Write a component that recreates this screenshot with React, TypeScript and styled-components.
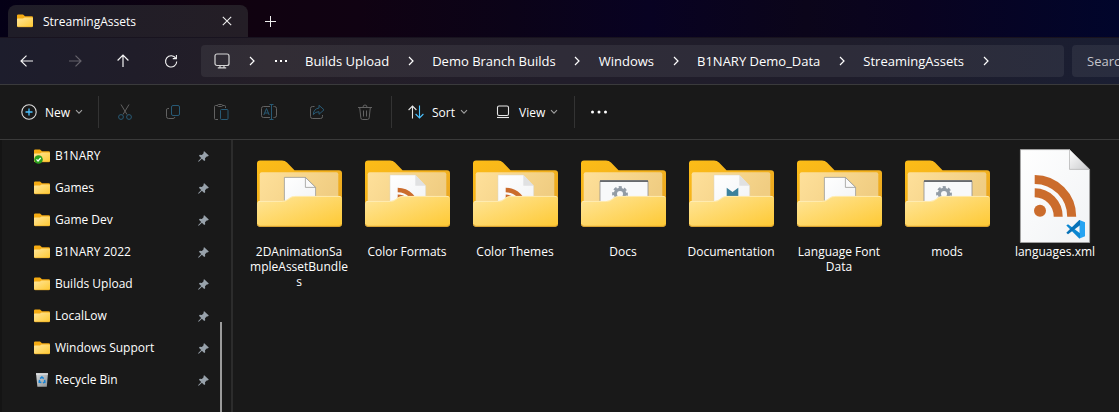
import React from "react";
import styled, { createGlobalStyle } from "styled-components";

const GlobalStyle = createGlobalStyle`
  * { box-sizing: border-box; }
  html, body, #root { height: 100%; }
  body {
    margin: 0;
    background: #191919;
    color: #fff;
    font-family: "Open Sans", "Noto Sans", sans-serif;
    font-size: 12px;
    overflow: hidden;
  }
  button { font: inherit; color: inherit; border: 0; background: none; padding: 0; }
  svg { display: block; flex: none; }
`;

const Window = styled.div`
  display: flex;
  flex-direction: column;
  height: 100vh;
`;

const TabStrip = styled.header`
  display: flex;
  align-items: flex-end;
  flex: none;
  height: 37px;
  padding-left: 8px;
  background: linear-gradient(90deg, #040016 0%, #10020f 19%, #100212 32%, #0b0318 46%, #080222 58%, #0b051a 72%, #090320 82%, #01052b 100%);
`;

const Tab = styled.div`
  display: flex;
  align-items: center;
  width: 240px;
  height: 32px;
  padding: 0 16px 0 9px;
  border-radius: 8px 8px 0 0;
  background: linear-gradient(90deg, #1f1d28, #241e26);
`;

const TabTitle = styled.span`
  flex: 1;
  margin-left: 10px;
  padding-top: 2px;
  line-height: 16px;
`;

const NewTab = styled.button`
  display: grid;
  place-items: center;
  width: 32px;
  height: 32px;
  margin-left: 6px;
`;

const NavBar = styled.nav`
  display: flex;
  align-items: center;
  flex: none;
  height: 48px;
  padding-left: 3px;
  border-top: 1px solid #18131f;
  border-bottom: 1px solid #3a3a3c;
  background: linear-gradient(90deg, #1d1d2c 0%, #201d29 12%, #241e27 24%, #211d2a 50%, #1f1d2b 75%, #1a1e32 100%);
`;

const NavButton = styled.button<{ $dim?: boolean }>`
  display: grid;
  place-items: center;
  flex: none;
  width: 48px;
  height: 32px;
  color: ${(p) => (p.$dim ? "#65626b" : "#f4f4f4")};
`;

const AddressBar = styled.div`
  display: flex;
  align-items: center;
  flex: none;
  width: calc(100% - 253px);
  height: 32px;
  margin-left: 6px;
  padding-left: 13px;
  border-radius: 4px;
  background: rgba(255, 255, 255, 0.065);
  font-size: 13px;
`;

const Separator = styled.span`
  display: grid;
  place-items: center;
  flex: none;
  width: 43px;
`;

const Overflow = styled.button`
  display: grid;
  place-items: center;
  width: 16px;
  height: 32px;
  margin-right: 16px;
`;

const Crumb = styled.a`
  color: #fff;
  text-decoration: none;
  white-space: nowrap;
  line-height: 18px;
`;

const SearchBox = styled.input`
  flex: 1;
  min-width: 0;
  height: 32px;
  margin-left: 8px;
  padding: 0 0 0 15px;
  border: 0;
  border-radius: 4px 0 0 4px;
  background: rgba(255, 255, 255, 0.065);
  font: inherit;
  font-size: 13px;
  color: #fff;
  &::placeholder { color: #c4c4ca; opacity: 1; }
`;

const Toolbar = styled.div`
  display: flex;
  align-items: center;
  flex: none;
  height: 55px;
  border-bottom: 1px solid #3a3a3a;
  background: #191919;
`;

const ToolGroup = styled.div<{ $left?: number; $right?: number }>`
  display: flex;
  align-items: center;
  padding: 0 ${(p) => p.$right ?? 0}px 0 ${(p) => p.$left ?? 0}px;
`;

const Divider = styled.span`
  width: 1px;
  height: 32px;
  background: #333;
`;

const ToolButton = styled.button`
  display: grid;
  place-items: center;
  width: 48px;
  height: 32px;
  color: #626262;
`;

const MenuButton = styled.button<{ $width: number }>`
  display: flex;
  align-items: center;
  width: ${(p) => p.$width}px;
  height: 32px;
  line-height: 16px;
  white-space: nowrap;
  > span { margin: 0 5px 0 8px; padding-top: 2px; }
`;

const Body = styled.div`
  display: flex;
  flex: 1;
  min-height: 0;
`;

const Sidebar = styled.aside`
  display: flex;
  flex: none;
  width: 233px;
  border-left: 2px solid #141414;
  border-right: 2px solid #2c2c2c;
`;

const PinnedList = styled.ul`
  flex: 1;
  margin: 0;
  padding: 0 11px 0 32px;
  list-style: none;
`;

const PinnedItem = styled.li`
  display: flex;
  align-items: center;
  height: 32px;
`;

const PinnedLink = styled.a`
  display: flex;
  align-items: center;
  flex: 1;
  gap: 5px;
  color: #fff;
  text-decoration: none;
  line-height: 16px;
`;

const ScrollTrack = styled.div`
  display: flex;
  flex-direction: column;
  justify-content: flex-end;
  width: 11px;
`;

const ScrollThumb = styled.div`
  width: 2px;
  height: 33%;
  background: #9b9b9b;
`;

const FileGrid = styled.main`
  display: grid;
  grid-template-columns: repeat(auto-fill, 108px);
  align-content: start;
  flex: 1;
  padding: 7px 0 0 12px;
`;

const FileTile = styled.figure`
  display: flex;
  flex-direction: column;
  align-items: center;
  margin: 0;
`;

const FileName = styled.figcaption`
  width: 100px;
  margin-top: 1px;
  line-height: 15px;
  text-align: center;
  white-space: pre-line;
`;

const BLUE = "#4cc2ff";
const DIM_BLUE = "#285a75";

function Defs() {
  return (
    <svg width="0" height="0" aria-hidden="true">
      <defs>
        <linearGradient id="folderBack" x1="0" y1="0" x2="1" y2="1">
          <stop offset="0" stopColor="#fdbd17" />
          <stop offset="1" stopColor="#e9a623" />
        </linearGradient>
        <linearGradient id="folderInner" x1="0" y1="0" x2="1" y2="0.3">
          <stop offset="0" stopColor="#fee09a" />
          <stop offset="1" stopColor="#f0cd82" />
        </linearGradient>
        <linearGradient id="folderFront" x1="0" y1="0" x2="1" y2="1">
          <stop offset="0" stopColor="#ffe69b" />
          <stop offset="1" stopColor="#fec933" />
        </linearGradient>
        <linearGradient id="paper" x1="0" y1="0" x2="1" y2="1">
          <stop offset="0" stopColor="#fff" />
          <stop offset="1" stopColor="#f1f3f5" />
        </linearGradient>
        <linearGradient id="foldCorner" x1="0" y1="0" x2="1" y2="1">
          <stop offset="0" stopColor="#fff" />
          <stop offset="1" stopColor="#c9cacc" />
        </linearGradient>
        <linearGradient id="bin" x1="0" y1="0" x2="1" y2="1">
          <stop offset="0" stopColor="#d5d8da" />
          <stop offset="1" stopColor="#8e9498" />
        </linearGradient>
      </defs>
    </svg>
  );
}

function Chevron() {
  return (
    <svg width="8" height="10" viewBox="0 0 8 10" fill="none" stroke="currentColor" strokeWidth="1.2">
      <path d="M2 1l4 4-4 4" />
    </svg>
  );
}

function CaretDown() {
  return (
    <svg width="8" height="6" viewBox="0 0 8 6" fill="none" stroke="#a0a0a0" strokeWidth="1.1">
      <path d="M1 1.2l3 3 3-3" />
    </svg>
  );
}

function SmallFolder({ synced }: { synced?: boolean }) {
  return (
    <svg width="16" height="16" viewBox="0 0 16 16">
      <path d="M0 2.6Q0 1.4 1.2 1.4H6L8 3.2H14.8Q16 3.2 16 4.4V9H0z" fill="#f5ab12" />
      <path d="M0 6Q0 5.4 .8 5.4H6L7.6 4.4H15.2Q16 4.4 16 5.2V13Q16 14 15 14H1Q0 14 0 13z" fill="url(#folderFront)" />
      <path d="M.3 13.2Q.5 13.8 1.2 13.8H14.8Q15.6 13.8 15.8 13.2" fill="none" stroke="#e9a823" strokeWidth=".6" />
      {synced && (
        <>
          <circle cx="4.5" cy="11.5" r="4.3" fill="#2ba11d" />
          <path d="M2.5 11.4l1.5 1.6 2.7-3" fill="none" stroke="#fff" strokeWidth="1.3" />
        </>
      )}
    </svg>
  );
}

function RecycleBin() {
  return (
    <svg width="16" height="16" viewBox="0 0 16 16">
      <path d="M2 1.3H14L12.8 14.8H3.4z" fill="url(#bin)" />
      <path d="M2 1.3H14V2.6H2z" fill="#e3e5e7" />
      <g fill="none" stroke="#1583d6" strokeWidth="1.5">
        <path d="M6.2 6.6L7.9 5l1.8 1.6" />
        <path d="M10.6 7.8l.3 2.4-2 .6" />
        <path d="M7.4 10.6l-2.2-.5.4-2.2" />
      </g>
    </svg>
  );
}

function Pin() {
  return (
    <svg width="11" height="11" viewBox="0 0 11 11" fill="#98a2ab">
      <path d="M6.2.2L10.8 4.6 9.8 5.5 9 5.2 7 7.2 7.2 9.2 6.2 10 3.9 7.7 1 10.6.2 10.8.3 9.9 3.2 7 .9 4.8 1.9 3.8 3.9 4 5.8 2 5.4 1z" />
    </svg>
  );
}

function Rss({ x, y, scale }: { x: number; y: number; scale: number }) {
  return (
    <g transform={`translate(${x} ${y}) scale(${scale})`} fill="none" stroke="#cb6c2c">
      <circle cx="5.3" cy="-6" r="6" fill="#cb6c2c" stroke="none" />
      <path d="M0-23.9A23.7 23.7 0 0 1 23.5 0" strokeWidth="9" />
      <path d="M0-37.3A37.1 37.1 0 0 1 37 0" strokeWidth="9" />
    </g>
  );
}

type Preview = "page" | "feed" | "settings" | "markdown";

function FolderContents({ kind }: { kind: Preview }) {
  if (kind === "settings") {
    return (
      <g>
        <path d="M25 34.5Q25 33.5 26 33.5H72Q73 33.5 73 34.5V60H25z" fill="#f8f9fa" stroke="#8d8d8d" strokeWidth=".8" />
        <path d="M25 33.2H73V35H25z" fill="#66696d" />
        <circle cx="45" cy="47" r="4.6" fill="none" stroke="#929ca6" strokeWidth="3.2" />
        <circle cx="45" cy="47" r="6.7" fill="none" stroke="#929ca6" strokeWidth="2.4" strokeDasharray="3.1 2.16" strokeDashoffset="-3.8" />
      </g>
    );
  }
  if (kind === "page") {
    return (
      <g stroke="#9a9a98" strokeWidth=".8">
        <path d="M33.4 30.4H54.4L64.6 40.4V60H33.4z" fill="url(#paper)" />
        <path d="M54.4 30.4V40.4H64.6z" fill="#fafafa" />
      </g>
    );
  }
  return (
    <g>
      <path d="M31 28H56.3L66.7 38.7V60H31z" fill="url(#paper)" stroke="#d9d5cb" strokeWidth=".5" />
      <path d="M56.3 28V38.7H66.7z" fill="#e0e1e2" />
      {kind === "feed" ? (
        <Rss x={38.7} y={62} scale={0.51} />
      ) : (
        <path d="M43.7 40.7L49.5 45 55.3 40.7V58H43.7z" fill="#3c819c" />
      )}
    </g>
  );
}

function LargeFolder({ kind }: { kind: Preview }) {
  return (
    <svg width="96" height="96" viewBox="0 0 96 96">
      <path d="M6 16.5Q6 13.5 9 13.5H31Q34 13.5 36 15.5L43.5 23.3H88Q91 23.3 91 26.3V60H6z" fill="url(#folderBack)" />
      <path d="M8.7 27.3Q8.7 25.3 10.7 25.3H85.3Q87.3 25.3 87.3 27.3V60H8.7z" fill="url(#folderInner)" />
      <FolderContents kind={kind} />
      <path d="M6 57Q6 54 9 54H31.5Q34.5 54 37 52L39 50.5Q41 49 44 49H88Q91 49 91 52V76.7Q91 79.7 88 79.7H9Q6 79.7 6 76.7z" fill="url(#folderFront)" />
      <path d="M6.4 77Q7 79.3 9 79.3H88Q90 79.3 90.6 77" fill="none" stroke="#dfa029" strokeWidth=".9" />
      <path d="M7 55.2Q7.8 54.4 9 54.4H31.5Q34.6 54.4 37 52.4L39 50.9Q41 49.4 44 49.4H88Q89.4 49.4 90.2 50.4" fill="none" stroke="#fff0c0" strokeWidth=".8" />
    </svg>
  );
}

function XmlFile() {
  return (
    <svg width="96" height="96" viewBox="0 0 96 96">
      <path d="M13.4 2.6H62.5L82.6 22.4V95.5H13.4z" fill="url(#paper)" stroke="#a5a5a5" strokeWidth=".8" />
      <path d="M62.5 2.6V22.4H82.6z" fill="url(#foldCorner)" stroke="#a5a5a5" strokeWidth=".6" />
      <Rss x={27.7} y={69.7} scale={1} />
      <path d="M72.5 73L78 75.3V89.2L72.5 91.6z" fill="#27a4f2" />
      <path d="M59.3 78.6L61 77.3 73 86.2V91.6L72 91.2z" fill="#0a86d1" />
      <path d="M59.3 85.8L61 87.2 73 78.3V73L72 73.3z" fill="#0672b8" />
    </svg>
  );
}

const crumbs = ["Builds Upload", "Demo Branch Builds", "Windows", "B1NARY Demo_Data", "StreamingAssets"];

const pinned = ["B1NARY", "Games", "Game Dev", "B1NARY 2022", "Builds Upload", "LocalLow", "Windows Support", "Recycle Bin"];

const folders: { name: string; kind: Preview }[] = [
  { name: "2DAnimationSa\nmpleAssetBundle\ns", kind: "page" },
  { name: "Color Formats", kind: "feed" },
  { name: "Color Themes", kind: "feed" },
  { name: "Docs", kind: "settings" },
  { name: "Documentation", kind: "markdown" },
  { name: "Language Font\nData", kind: "page" },
  { name: "mods", kind: "settings" },
];

const line = { width: 16, height: 16, viewBox: "0 0 16 16", fill: "none", stroke: "currentColor", strokeWidth: 1 };

export default function App() {
  return (
    <Window>
      <GlobalStyle />
      <TabStrip>
        <Tab>
          <SmallFolder />
          <TabTitle>StreamingAssets</TabTitle>
          <button aria-label="Close tab">
            <svg width="10" height="10" viewBox="0 0 10 10" stroke="#eee" strokeWidth="1.1">
              <path d="M.8.8l8.4 8.4M9.2.8L.8 9.2" />
            </svg>
          </button>
        </Tab>
        <NewTab aria-label="New tab">
          <svg width="11" height="11" viewBox="0 0 11 11" stroke="#eee">
            <path d="M5.5 0v11M0 5.5h11" />
          </svg>
        </NewTab>
      </TabStrip>

      <NavBar>
        <NavButton aria-label="Back">
          <svg {...line} strokeWidth={1.2}><path d="M14 8H2.2M7.5 2.6L2 8l5.5 5.4" /></svg>
        </NavButton>
        <NavButton aria-label="Forward" $dim>
          <svg {...line} strokeWidth={1.2}><path d="M2 8h11.8M8.5 2.6L14 8l-5.5 5.4" /></svg>
        </NavButton>
        <NavButton aria-label="Up">
          <svg {...line} strokeWidth={1.2}><path d="M8 14V2.2M2.6 7.5L8 2l5.4 5.5" /></svg>
        </NavButton>
        <NavButton aria-label="Refresh">
          <svg {...line} strokeWidth={1.1}>
            <path d="M12.9 5.5A5.6 5.6 0 1 0 13.7 8.4M13.4 2v3.6H9.8" />
          </svg>
        </NavButton>
        <AddressBar>
          <svg width="16" height="16" viewBox="0 0 16 16" fill="none" stroke="#d6d6d6" strokeWidth="1.2">
            <rect x="1" y="1" width="14" height="11.5" rx="2" />
            <path d="M6 12.5v2M10 12.5v2M3.8 14.8h8.4" />
          </svg>
          <Separator><Chevron /></Separator>
          <Overflow aria-label="More locations">
            <svg width="12" height="4" viewBox="0 0 12 4" fill="#fff">
              <path d="M0 1h2v2H0zM5 1h2v2H5zM10 1h2v2h-2z" />
            </svg>
          </Overflow>
          {crumbs.map((name) => (
            <React.Fragment key={name}>
              <Crumb href="#">{name}</Crumb>
              <Separator><Chevron /></Separator>
            </React.Fragment>
          ))}
        </AddressBar>
        <SearchBox type="text" aria-label="Search" placeholder="Search" />
      </NavBar>

      <Toolbar>
        <ToolGroup $left={21}>
          <MenuButton $width={77}>
            <svg width="16" height="16" viewBox="0 0 16 16" fill="none" stroke="#dcdcdc" strokeWidth="1.1">
              <circle cx="8" cy="8" r="7.2" />
              <path d="M8 4.5v7M4.5 8h7" stroke={BLUE} strokeWidth="1.3" />
            </svg>
            <span>New</span>
            <CaretDown />
          </MenuButton>
        </ToolGroup>
        <Divider />
        <ToolGroup $left={2} $right={2}>
          <ToolButton aria-label="Cut">
            <svg {...line}>
              <path d="M4 .5l6 10M12 .5l-6 10" />
              <circle cx="4" cy="13" r="2.4" stroke={DIM_BLUE} />
              <circle cx="12" cy="13" r="2.4" stroke={DIM_BLUE} />
            </svg>
          </ToolButton>
          <ToolButton aria-label="Copy">
            <svg {...line}>
              <path d="M4 4.5H2.8Q1.5 4.5 1.5 6V12.5Q1.5 14.5 3.5 14.5H8Q9.5 14.5 10 13" />
              <rect x="6.5" y="1.5" width="8" height="10" rx="1.5" stroke={DIM_BLUE} />
            </svg>
          </ToolButton>
          <ToolButton aria-label="Paste">
            <svg {...line}>
              <path d="M5 15.5H2.5Q1.5 15.5 1.5 14.5V2.5Q1.5 1.5 2.5 1.5H4.5M9.5 1.5H11.5Q12.5 1.5 12.5 2.5V4" />
              <rect x="4.5" y=".5" width="5" height="2" rx="1" />
              <rect x="7.5" y="5.5" width="7.5" height="10" rx="1" stroke={DIM_BLUE} />
            </svg>
          </ToolButton>
          <ToolButton aria-label="Rename">
            <svg {...line}>
              <path d="M9 2.5H2.5Q.5 2.5.5 4.5V11.5Q.5 13.5 2.5 13.5H9M12.5 2.5H13.5Q15.5 2.5 15.5 4.5V11.5Q15.5 13.5 13.5 13.5H12.5" />
              <path d="M2.8 11L5.5 4.5 8.2 11M3.8 9h3.6M8.5.5h4M10.5.5v15M8.5 15.5h4" stroke={DIM_BLUE} />
            </svg>
          </ToolButton>
          <ToolButton aria-label="Share">
            <svg {...line}>
              <path d="M5.5 2.5H3.5Q1.5 2.5 1.5 4.5V12.5Q1.5 14.5 3.5 14.5H11.5Q13.5 14.5 13.5 12.5V11" />
              <path d="M10 1.3L15 5.8 10 10.3V7.7Q6.5 7.6 4.3 10.6 4.6 4.8 10 4z" stroke={DIM_BLUE} />
            </svg>
          </ToolButton>
          <ToolButton aria-label="Delete">
            <svg {...line}>
              <path d="M1 3.5h14M6 3.2Q6 1 8 1T10 3.2M2.7 3.5l1.1 10.3Q4 15.5 5.5 15.5H10.5Q12 15.5 12.2 13.8L13.3 3.5M6.5 6.5v6M9.5 6.5v6" />
            </svg>
          </ToolButton>
        </ToolGroup>
        <Divider />
        <ToolGroup $left={16} $right={17}>
          <MenuButton $width={87}>
            <svg width="16" height="16" viewBox="0 0 16 16" fill="none" strokeWidth="1.1">
              <path d="M4.5 14.5V2M.6 6L4.5 2l3.9 4" stroke="#e6e6e6" />
              <path d="M11.5 1.5V14M7.6 10l3.9 4 3.9-4" stroke={BLUE} />
            </svg>
            <span>Sort</span>
            <CaretDown />
          </MenuButton>
          <MenuButton $width={62}>
            <svg width="16" height="16" viewBox="0 0 16 16" fill="none" stroke="#e6e6e6" strokeWidth="1.1">
              <rect x="2.5" y="2" width="11" height="9.5" rx="1.5" />
              <path d="M2 13.5h12" />
            </svg>
            <span>View</span>
            <CaretDown />
          </MenuButton>
        </ToolGroup>
        <Divider />
        <ToolButton aria-label="See more">
          <svg width="18" height="4" viewBox="0 0 18 4" fill="#fff">
            <circle cx="2.5" cy="2" r="1.5" />
            <circle cx="9" cy="2" r="1.5" />
            <circle cx="15.5" cy="2" r="1.5" />
          </svg>
        </ToolButton>
      </Toolbar>

      <Body>
        <Sidebar>
          <PinnedList>
            {pinned.map((name, i) => (
              <PinnedItem key={name}>
                <PinnedLink href="#">
                  {name === "Recycle Bin" ? <RecycleBin /> : <SmallFolder synced={i === 0} />}
                  {name}
                </PinnedLink>
                <Pin />
              </PinnedItem>
            ))}
          </PinnedList>
          <ScrollTrack><ScrollThumb /></ScrollTrack>
        </Sidebar>
        <FileGrid>
          {folders.map((f) => (
            <FileTile key={f.name}>
              <LargeFolder kind={f.kind} />
              <FileName>{f.name}</FileName>
            </FileTile>
          ))}
          <FileTile>
            <XmlFile />
            <FileName>languages.xml</FileName>
          </FileTile>
        </FileGrid>
      </Body>
      <Defs />
    </Window>
  );
}
